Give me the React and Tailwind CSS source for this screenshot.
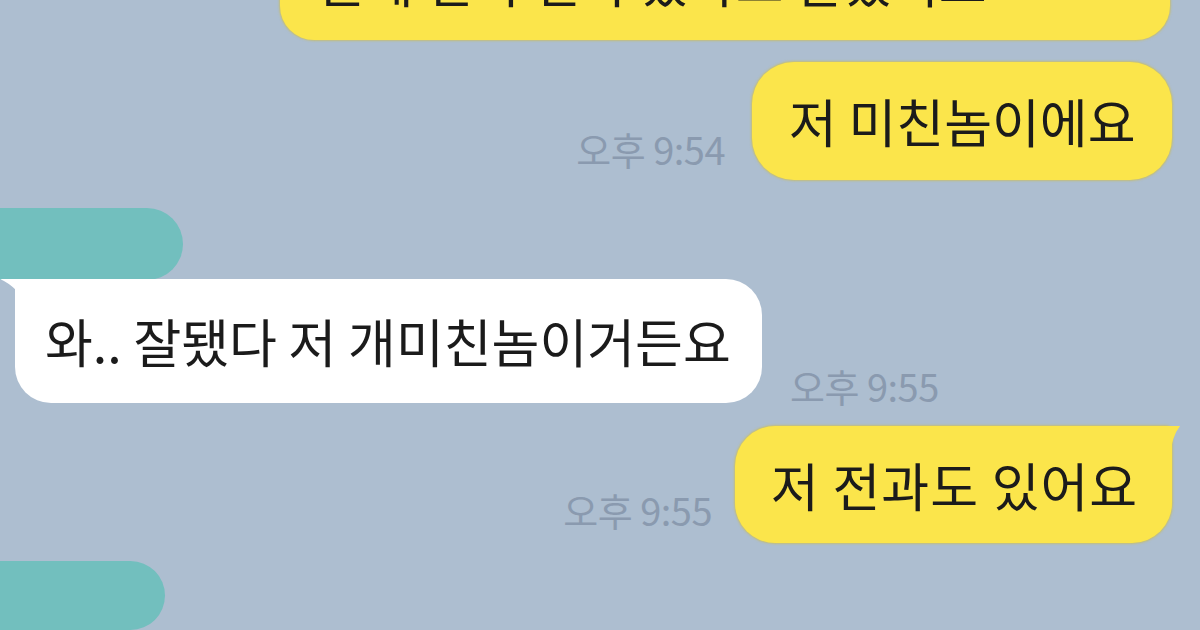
import React from "react";

const font = { fontFamily: '"Noto Sans CJK KR", "Noto Sans", sans-serif' };

function Time({ children, className = "" }) {
  return (
    <div className={"text-[38px] leading-none text-[#8a9aaf] tracking-[-0.5px] " + className} style={font}>
      {children}
    </div>
  );
}

export default function App() {
  return (
    <div className="w-[1200px] h-[630px] overflow-hidden bg-[#adbed0] flex flex-col" style={font}>
      {/* Row 1 - top cut off yellow bubble */}
      <div className="flex justify-end pr-[30px] -mt-[78px]">
        <div className="w-[890px] h-[118px] rounded-[34px] bg-[#fbe54b] shadow-[0_0_2px_1px_rgba(210,190,60,0.6)] flex items-center pl-[38px]">
          <span className="text-[52px] text-[#1b1b1b] leading-none">근데 진짜 전과 있다고 말했어요</span>
        </div>
      </div>

      {/* Row 2 */}
      <div className="flex justify-end items-end pr-[28px] mt-[22px] gap-[27px]">
        <Time className="mb-[12px]">오후 9:54</Time>
        <div className="w-[420px] h-[118px] rounded-[42px] bg-[#fbe54b] shadow-[0_0_2px_1px_rgba(210,190,60,0.6)] flex items-center pl-[37px]">
          <span className="text-[52px] text-[#1b1b1b] leading-none">저 미친놈이에요</span>
        </div>
      </div>

      {/* teal smudge */}
      <div className="mt-[28px] w-[183px] h-[84px] rounded-r-[40px] bg-[#72bfbe]" />

      {/* Row 3 - white bubble */}
      <div className="flex items-end -mt-[1px] gap-[28px]">
        <div className="relative ml-[15px] w-[747px] h-[124px] rounded-[36px] rounded-tl-[6px] bg-white flex items-center pl-[30px]">
          <svg className="absolute -left-[15px] top-0" width="30" height="30" viewBox="0 0 30 30">
            <path d="M0 0 L30 0 L30 30 Q18 8 0 0 Z" fill="#ffffff" />
          </svg>
          <span className="text-[52px] text-[#1b1b1b] leading-none">와.. 잘됐다 저 개미친놈이거든요</span>
        </div>
        <Time className="-mb-[2px]">오후 9:55</Time>
      </div>

      {/* Row 4 */}
      <div className="flex justify-end items-end pr-[28px] mt-[23px] gap-[23px]">
        <Time className="mb-[14px]">오후 9:55</Time>
        <div className="relative w-[437px] h-[117px] rounded-[40px] rounded-tr-[6px] bg-[#fbe54b] shadow-[0_0_2px_1px_rgba(210,190,60,0.6)] flex items-center pl-[36px]">
          <svg className="absolute -right-[8px] top-0" width="28" height="30" viewBox="0 0 28 30">
            <path d="M0 0 L28 0 Q20 10 18 30 L0 30 Z" fill="#fbe54b" />
          </svg>
          <span className="text-[52px] text-[#1b1b1b] leading-none tracking-[1px]">저 전과도 있어요</span>
        </div>
      </div>

      {/* bottom teal smudge */}
      <div className="mt-[18px] w-[165px] h-[80px] rounded-r-[40px] bg-[#72bfbe]" />
    </div>
  );
}
